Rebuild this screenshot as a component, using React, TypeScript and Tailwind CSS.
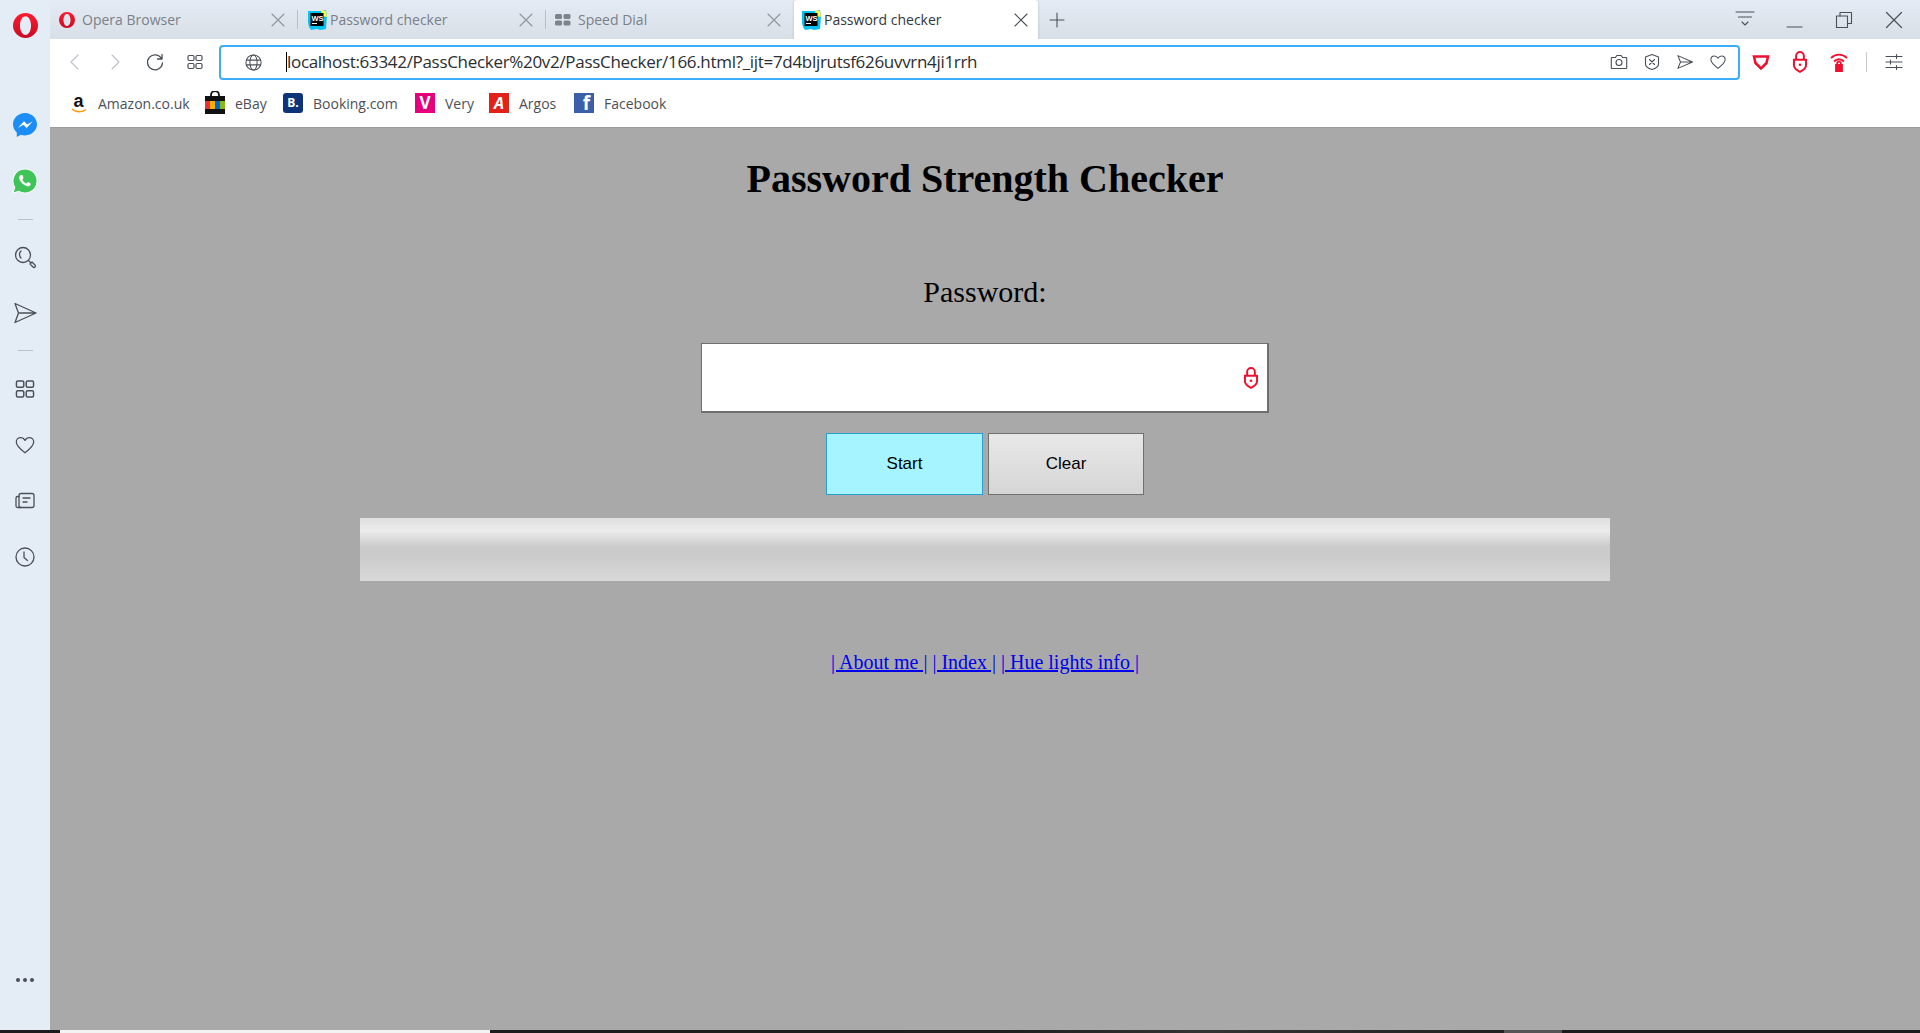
import React from "react";

const ui = { fontFamily: '"Open Sans","Noto Sans",sans-serif' };
const serif = { fontFamily: '"Liberation Serif","Times New Roman",serif' };

function Ic({ s = 20, v = 24, c = "#4a5058", w = 1.5, children, className = "" }: any) {
  return (
    <svg width={s} height={s} viewBox={`0 0 ${v} ${v}`} fill="none" stroke={c} strokeWidth={w} strokeLinecap="round" strokeLinejoin="round" className={`shrink-0 ${className}`}>
      {children}
    </svg>
  );
}
const X = ({ c = "#8a8f96", s = 16 }: any) => (
  <Ic s={s} v={16} c={c} w={1.1}><path d="M2 2l12 12M14 2L2 14" /></Ic>
);
const Ws = () => (
  <svg width="20" height="20" viewBox="0 0 20 20" className="shrink-0">
    <path d="M1 1h13l5-1 1 6-1 13-6 1-3-1-6 1-2-3-1-4z" fill="#07c3f2" />
    <path d="M14 0l5 1 1 6-5-1z" fill="#fcf84a" />
    <rect x="3.5" y="3" width="13" height="13" fill="#000" />
    <text x="4.5" y="10.500" fontSize="7.500" fontWeight="700" fill="#fff" fontFamily="Liberation Sans">WS</text>
    <rect x="5" y="13" width="5" height="1" fill="#fff" />
  </svg>
);
const OperaO = ({ s = 16, id = "o" }: any) => (
  <svg width={s} height={s} viewBox="0 0 24 24" className="shrink-0">
    <defs>
      <linearGradient id={id} x1="0" y1="0" x2="0" y2="1">
        <stop offset="0" stopColor="#ff1b2d" />
        <stop offset="1" stopColor="#c90a22" />
      </linearGradient>
    </defs>
    <path fillRule="evenodd" d="M12 0a12 12 0 1 0 0 24 12 12 0 0 0 0-24zm0 3c3.100 0 5.300 4 5.300 9s-2.200 9-5.300 9-5.300-4-5.300-9 2.200-9 5.300-9z" fill={`url(#${id})`} />
  </svg>
);
const Grid = ({ s = 18, c = "#4a5058" }: any) => (
  <Ic s={s} v={18} c={c} w={1.2}>
    <rect x="2" y="2.500" width="6" height="5" rx="1.200" /><rect x="10" y="2.500" width="6" height="5" rx="1.200" />
    <rect x="2" y="10.500" width="6" height="5" rx="1.200" /><rect x="10" y="10.500" width="6" height="5" rx="1.200" />
  </Ic>
);
const Heart = ({ s = 20 }: any) => (
  <Ic s={s} v={24} w={1.4}><path d="M12 20.500C6 16 2.500 12.800 2.500 8.800 2.500 5.800 4.800 4 7.200 4c2 0 3.700 1 4.800 3 1.100-2 2.800-3 4.800-3 2.400 0 4.700 1.800 4.700 4.800 0 4-3.500 7.200-9.500 11.700z" /></Ic>
);
const Send = ({ s = 20 }: any) => (
  <Ic s={s} v={24} w={1.4}><path d="M2.500 3.500L22 12 2.500 20.500 6 12zM6 12h16" /></Ic>
);
const RedLock = ({ s = 20 }: any) => (
  <svg width={s} height={s} viewBox="0 0 20 20" fill="none" stroke="#f00f2e" strokeWidth="1.800" className="shrink-0">
    <path d="M6.500 8V4.500a3.500 3.500 0 0 1 7 0V8" />
    <path d="M4.500 8h11v5c0 2.800-2.500 4.500-5.500 6-3-1.500-5.500-3.200-5.500-6z" />
    <circle cx="10" cy="12.500" r="1.200" fill="#f00f2e" stroke="none" />
  </svg>
);

function Tab({ icon, label, sep = false }: any) {
  return (
    <div className="w-[248px] h-[39px] flex items-center shrink-0 pl-[9px]">
      <div className="w-[22px] flex justify-start">{icon}</div>
      <span className="ml-[1px] text-[14px] flex-1 truncate text-[#7a8088]">{label}</span>
      <X c="#8f949a" />
      <div className={`ml-[11px] w-px h-[19px] ${sep ? "bg-[#b9c0c9]" : "bg-transparent"}`} />
    </div>
  );
}

function ActiveTab({ icon, label }: any) {
  return (
    <div className="w-[244px] h-[39px] flex items-center shrink-0 bg-white rounded-t-[3px] pl-[7px] pr-[9px] shadow-[0_0_3px_rgba(0,0,0,0.18)]">
      <div className="w-[22px] flex justify-start">{icon}</div>
      <span className="ml-[1px] text-[14px] flex-1 truncate text-[#32373d]">{label}</span>
      <X c="#4a4f55" />
    </div>
  );
}

function Bookmark({ icon, label, w, col = 30 }: any) {
  return (
    <div className="flex items-center shrink-0" style={{ width: w }}>
      <div className="flex justify-start" style={{ width: col }}>{icon}</div>
      <span className="text-[14px] text-[#4b5058]">{label}</span>
    </div>
  );
}

export default function App() {
  return (
    <div className="w-[1920px] h-[1033px] overflow-hidden flex flex-col bg-black" style={ui}>
      <div className="flex flex-1 min-h-0">
        <aside className="w-[50px] shrink-0 bg-[#e4ecf5] flex flex-col items-center">
          <div className="h-[50px] flex items-center justify-center"><OperaO s={25} id="oside" /></div>
          <svg width="26" height="26" viewBox="0 0 26 26" className="mt-[62px]">
            <path d="M13 1C6.400 1 1 6 1 12.300c0 3.300 1.400 6.200 3.800 8.300V25l4-2.200c1.300.4 2.700.6 4.200.6 6.600 0 12-5 12-11.100S19.600 1 13 1z" fill="#1c8cf7" />
            <path d="M5.800 16l6.200-6.800 3.200 3.300 5.600-3.300-6.200 6.800-3.200-3.300z" fill="#fff" />
          </svg>
          <svg width="26" height="26" viewBox="0 0 26 26" className="mt-[30px]">
            <path d="M13 1A12 12 0 0 0 2.800 19.300L1 25l5.900-1.700A12 12 0 1 0 13 1z" fill="#3fc45a" stroke="#fff" strokeWidth="1" />
            <path d="M9.200 7c-.5 0-1 .2-1.400.8-.9 1.200-.8 2.800.1 4.500 1.500 2.800 3.700 4.800 6.500 5.800 1.800.6 3.200.2 4-1 .4-.7.400-1.300.3-1.500l-2.800-1.500-1.400 1.400c-1.900-.8-3.300-2.200-4.200-4.100l1.300-1.400L10.400 7z" fill="#fff" />
          </svg>
          <div className="w-[15px] h-px bg-[#b8c2cd] mt-[25px]" />
          <Ic s={24} v={24} w={1.3} className="mt-[25px]"><circle cx="10" cy="10" r="7.500" /><path d="M15.500 15.500l2 2M17 19l2-2 3 3a1.400 1.400 0 0 1-2 2z" /><path d="M8 6c-2 1.500-2 5 0 7" /></Ic>
          <Ic s={24} v={24} w={1.3} className="mt-[32px]"><path d="M2 2.500L23 12 2 21.500 5.500 12zM5.500 12H23" /></Ic>
          <div className="w-[15px] h-px bg-[#b8c2cd] mt-[25px]" />
          <div className="mt-[27px]"><Grid s={22} /></div>
          <div className="mt-[34px]"><Heart s={22} /></div>
          <Ic s={22} v={22} w={1.3} className="mt-[34px]"><rect x="5" y="3.500" width="15" height="14" rx="2" /><path d="M5 6.500H3.500A1.500 1.500 0 0 0 2 8v8a1.500 1.500 0 0 0 1.500 1.500H7M9 8h7M9 12h4" /></Ic>
          <Ic s={22} v={22} w={1.3} className="mt-[34px]"><circle cx="11" cy="11" r="9" /><path d="M10 6v5.500l3.500 3" /></Ic>
          <div className="mt-auto mb-[48px] flex gap-[3px]">
            <div className="w-[4px] h-[4px] rounded-full bg-[#4a5058]" />
            <div className="w-[4px] h-[4px] rounded-full bg-[#4a5058]" />
            <div className="w-[4px] h-[4px] rounded-full bg-[#4a5058]" />
          </div>
        </aside>

        <div className="flex-1 flex flex-col min-w-0">
          <div className="h-[39px] shrink-0 flex bg-gradient-to-b from-[#e4ebf4] to-[#d9dfe7]">
            <Tab sep icon={<OperaO s={16} id="otab" />} label="Opera Browser" />
            <Tab sep icon={<Ws />} label="Password checker" />
            <Tab icon={<svg width="16" height="12" viewBox="0 0 16 12"><rect width="7" height="5" rx="1.500" fill="#7e848b" /><rect x="8.500" width="7" height="5" rx="1.500" fill="#7e848b" /><rect y="6.500" width="7" height="5" rx="1.500" fill="#7e848b" /><rect x="8.500" y="6.500" width="7" height="5" rx="1.500" fill="#7e848b" /></svg>} label="Speed Dial" />
            <ActiveTab icon={<Ws />} label="Password checker" />
            <div className="ml-[11px] flex items-center">
              <Ic s={16} v={16} w={1.1}><path d="M8 1v14M1 8h14" /></Ic>
            </div>
            <div className="ml-auto flex items-center pr-[17px]">
              <Ic s={20} v={20} w={1.1}><path d="M1 2h18M3.500 7h13M7 12l3 3 3-3" /></Ic>
              <Ic s={18} v={18} w={1.1} className="ml-[30px]"><path d="M2 16h15" /></Ic>
              <Ic s={18} v={18} w={1.1} className="ml-[32px]"><rect x="1.500" y="5" width="11" height="11.500" /><path d="M5 5V1.500h11.500V12.500H12.500" /></Ic>
              <Ic s={18} v={18} w={1.2} className="ml-[32px]"><path d="M1.500 1.500l15 15M16.500 1.500l-15 15" /></Ic>
            </div>
          </div>

          <div className="h-[46px] shrink-0 bg-white flex items-center">
            <div className="flex items-center w-[169px] pl-[15px]">
              <Ic s={20} v={20} c="#bcc1c7" w={1.1}><path d="M13 3l-7 7 7 7" /></Ic>
              <Ic s={20} v={20} c="#bcc1c7" w={1.1} className="ml-[20px]"><path d="M7 3l7 7-7 7" /></Ic>
              <Ic s={20} v={20} w={1.300} className="ml-[20px]"><path d="M16.500 6.500A7.500 7.500 0 1 0 17.500 11M17 2.500V7h-4.500" /></Ic>
              <div className="ml-[21px]"><Grid s={18} /></div>
            </div>
            <div className="w-[1521px] h-[35px] shrink-0 border-2 border-[#3badfb] rounded-[4px] flex items-center">
              <Ic s={19} v={20} w={1.1} className="ml-[23px]"><circle cx="10" cy="10" r="8" /><ellipse cx="10" cy="10" rx="3.800" ry="8" /><path d="M2.500 7.500h15M2.500 12.500h15" /></Ic>
              <div className="ml-[23px] w-px h-[20px] bg-black" />
              <span className="text-[17px] tracking-[-0.31px] text-[#2a2e33] whitespace-nowrap">localhost:63342/PassChecker%20v2/PassChecker/166.html?_ijt=7d4bljrutsf626uvvrn4ji1rrh</span>
              <div className="ml-auto flex items-center pr-[11px] gap-[15px]">
                <Ic s={18} v={18} w={1.1}><path d="M2 4.500h3.500L6.800 2.500h4.400l1.300 2H16a.7.7 0 0 1 .7.7v9.600a.7.7 0 0 1-.7.7H2a.7.7 0 0 1-.7-.7V5.200a.7.7 0 0 1 .7-.7z" /><circle cx="9" cy="9.500" r="3" /></Ic>
                <Ic s={18} v={18} w={1.1}><path d="M9 1.500l6.500 2.500v7c0 2.500-3 4.500-6.500 5.500-3.500-1-6.500-3-6.500-5.500V4z" /><path d="M6.500 6.500l5 5M11.500 6.500l-5 5" /></Ic>
                <Send s={18} />
                <Heart s={18} />
              </div>
            </div>
            <div className="flex items-center ml-[11px]">
              <svg width="20" height="20" viewBox="0 0 20 20" fill="none" stroke="#f00f2e" strokeWidth="2.500" className="shrink-0"><path d="M3 4.500h14l-1.500 6.500L10 16.500 4.500 11z" /></svg>
              <div className="ml-[18px]"><RedLock s={22} /></div>
              <svg width="20" height="22" viewBox="0 0 20 22" fill="none" stroke="#f00f2e" strokeWidth="1.800" className="shrink-0 ml-[18px]"><path d="M2 7c4.500-4.500 11.500-4.500 16 0M5 10.500c3-3 7-3 10 0" /><path d="M7 14h6v6H7z" fill="#f00f2e" /><path d="M8.200 14v-1.500a1.800 1.800 0 0 1 3.600 0V14" /></svg>
              <div className="ml-[17px] w-px h-[20px] bg-[#c9cdd2]" />
              <Ic s={20} v={20} w={1.1} className="ml-[17px]"><path d="M2 4.500h16M2 10h16M2 15.500h16M12.500 2.500v4M6.500 8v4M12.500 13.500v4" /></Ic>
            </div>
          </div>

          <div className="h-[42px] shrink-0 bg-white flex items-center pl-[20px] pb-[6px]">
            <Bookmark w={135} col={28} label="Amazon.co.uk" icon={<svg width="20" height="22" viewBox="0 0 20 22"><text x="3.500" y="15" fontSize="18" fontWeight="700" fill="#111" fontFamily="Liberation Sans">a</text><path d="M2 17c4 3.500 10 3.500 14 .5" stroke="#f90" strokeWidth="1.500" fill="none" /></svg>} />
            <Bookmark w={78} label="eBay" icon={<svg width="20" height="24" viewBox="0 0 20 24"><path d="M6 6V4a4 4 0 0 1 8 0v2" fill="none" stroke="#111" strokeWidth="1.800" /><rect y="5" width="20" height="5" fill="#111" /><rect y="10" width="5" height="8" fill="#e53238" /><rect x="5" y="10" width="5" height="8" fill="#f5af02" /><rect x="10" y="10" width="5" height="8" fill="#0064d2" /><rect x="15" y="10" width="5" height="8" fill="#86b817" /><rect y="18" width="20" height="5" fill="#111" /></svg>} />
            <Bookmark w={132} label="Booking.com" icon={<div className="w-[20px] h-[20px] rounded-[3px] bg-[#0f3378] flex items-center justify-center text-white text-[12px] font-bold">B.</div>} />
            <Bookmark w={74} label="Very" icon={<div className="w-[20px] h-[20px] bg-[#e6007e] flex items-center justify-center text-white text-[17px] font-bold">V</div>} />
            <Bookmark w={85} label="Argos" icon={<div className="w-[20px] h-[20px] bg-[#e32119] flex items-center justify-center text-white text-[16px] font-bold italic">A</div>} />
            <Bookmark w={100} label="Facebook" icon={<div className="w-[20px] h-[20px] bg-[#3b5fa8] flex items-end justify-end pr-[4px] text-white text-[19px] leading-[20px] font-bold">f</div>} />
          </div>

          <main className="flex-1 bg-[#a9a9a9] border-t border-[#9c9c9c] flex flex-col items-center text-black" style={serif}>
            <h1 className="mt-[28px] text-[40px] leading-[46px] font-bold">Password Strength Checker</h1>
            <div className="mt-[73px] text-[30px] leading-[34px]">Password:</div>
            <div className="mt-[34px] w-[568px] h-[70px] border border-[#6f6f6f] border-r-2 border-b-2 bg-white flex items-center justify-end pr-[5px]">
              <RedLock s={22} />
            </div>
            <div className="mt-[20px] flex gap-[5px]" style={{ fontFamily: '"Liberation Sans",Arial,sans-serif' }}>
              <button className="w-[157px] h-[62px] bg-[#a6f4ff] border border-[#2a9fd6] text-[17px] text-black">Start</button>
              <button className="w-[156px] h-[62px] bg-gradient-to-b from-[#e8e8e8] to-[#d6d6d6] border border-[#707070] text-[17px] text-black">Clear</button>
            </div>
            <div className="mt-[23px] w-[1250px] h-[63px] bg-[linear-gradient(to_bottom,#dedede_0%,#ececec_20%,#cbcbcb_45%,#cbcbcb_60%,#d9d9d9_100%)]" />
            <div className="mt-[70px] text-[20px] leading-[23px] whitespace-pre">
              <a className="text-[#0000ee] underline" href="#x">| About me |</a>
              <span> </span>
              <a className="text-[#0000ee] underline" href="#x">| Index |</a>
              <span> </span>
              <a className="text-[#0000ee] underline" href="#x">| Hue lights info |</a>
            </div>
          </main>
        </div>
      </div>
      <div className="h-[3px] shrink-0 flex bg-[#1c1c1c]">
        <div className="w-[60px]" />
        <div className="w-[430px] bg-[#f2f2f2]" />
        <div className="w-[1014px] bg-[linear-gradient(to_right,#1c1c1c,#1f1f1f_50%,#333_70%,#222)]" />
        <div className="w-[58px] bg-[#555]" />
      </div>
    </div>
  );
}
